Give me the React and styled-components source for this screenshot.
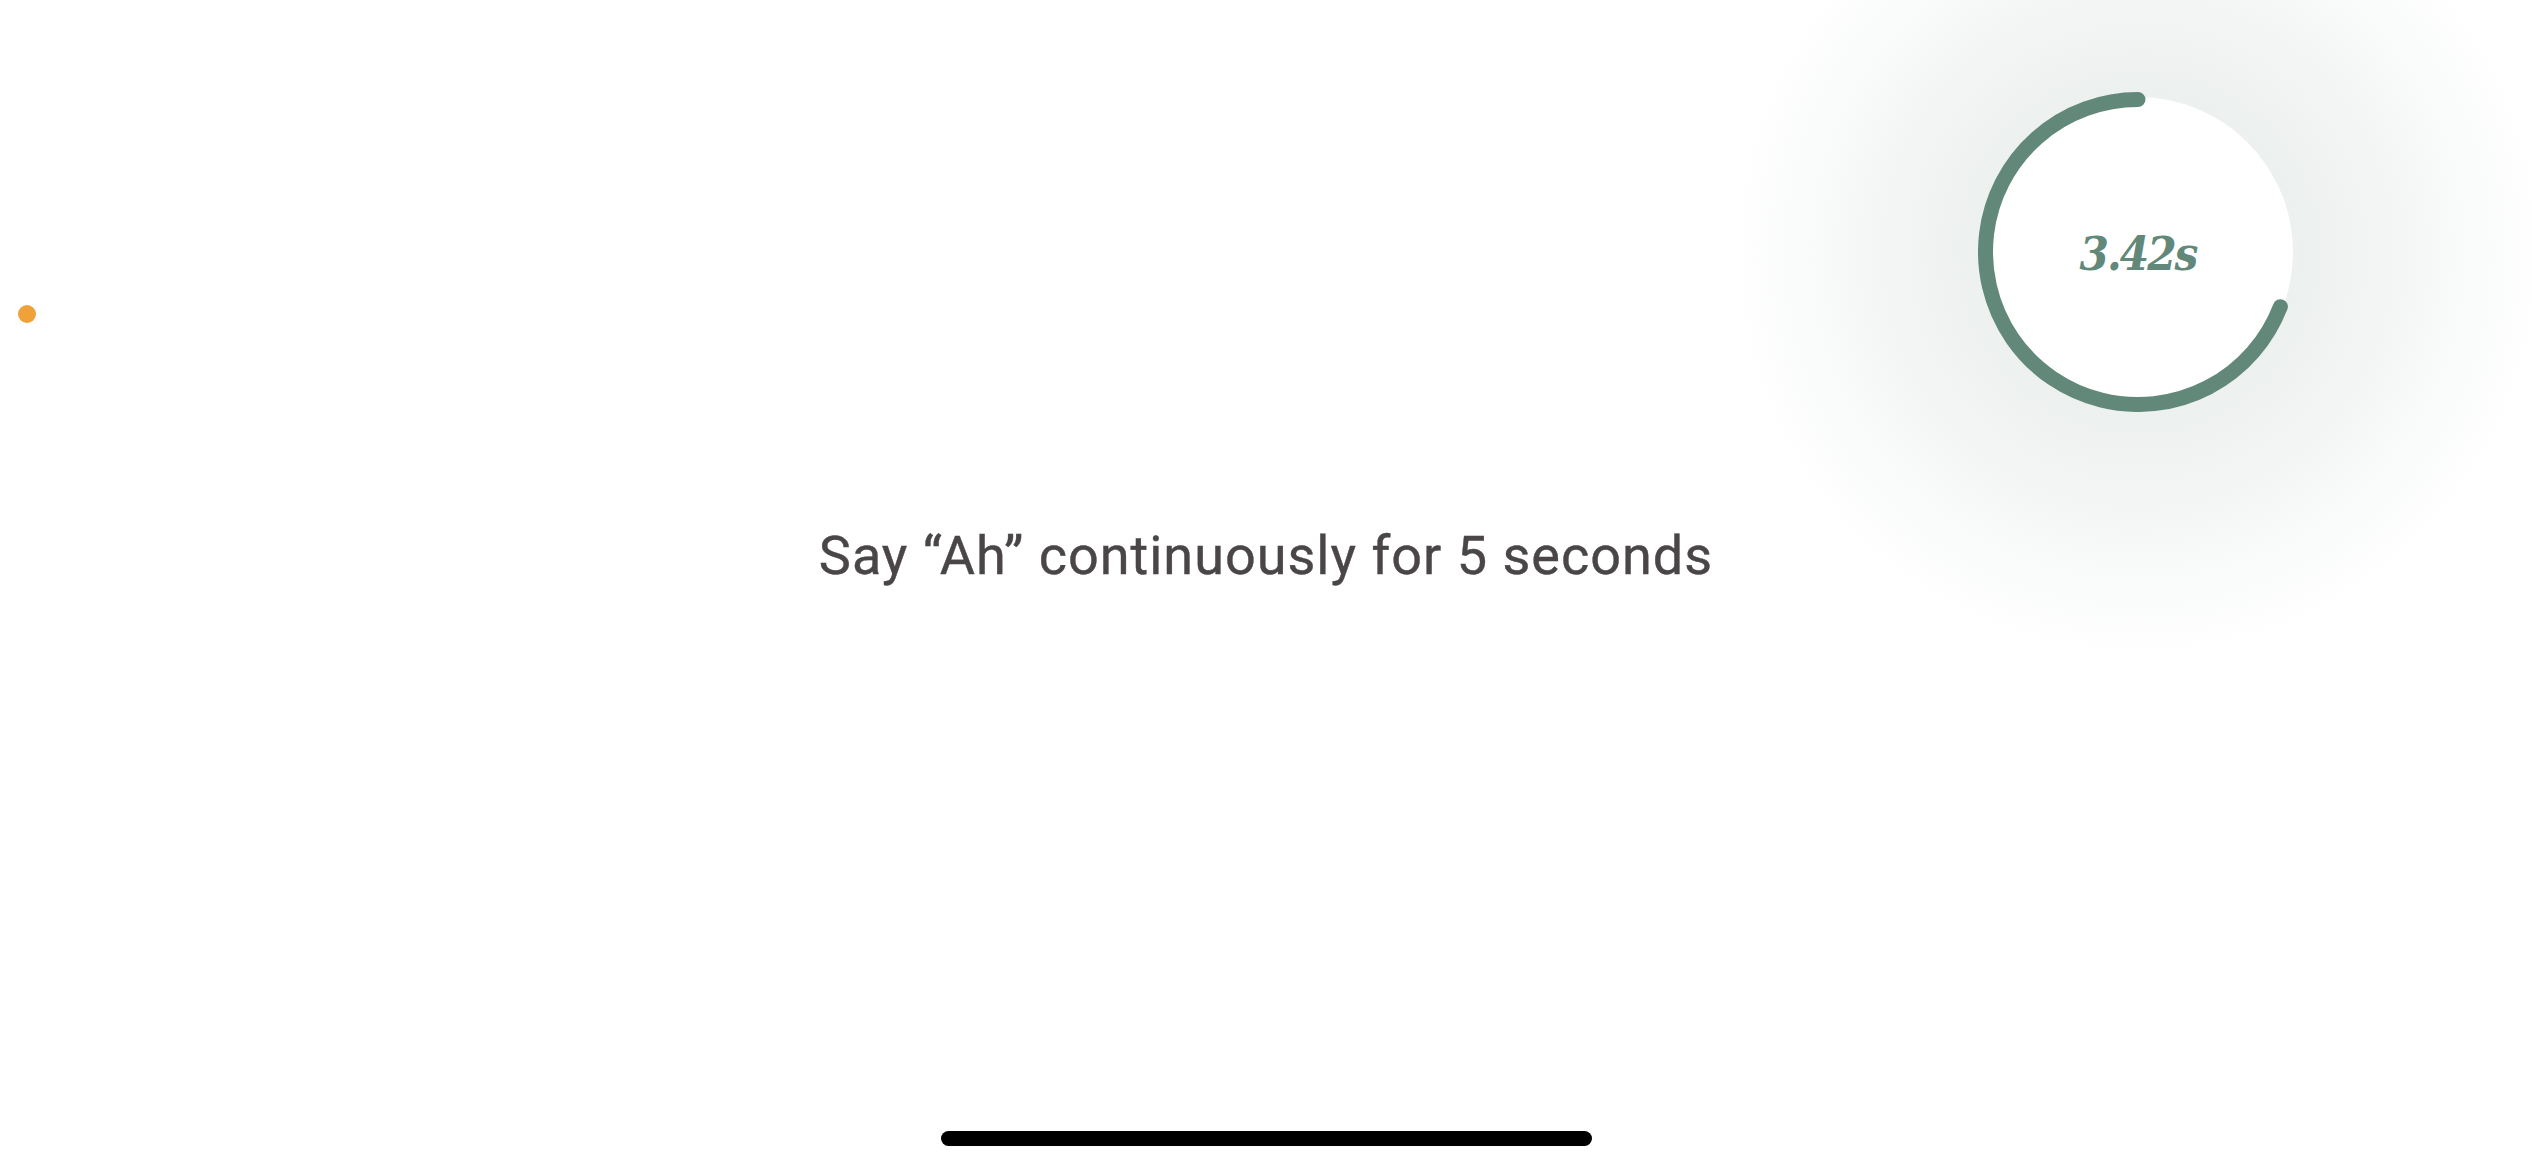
import React from "react";
import styled, { createGlobalStyle } from "styled-components";

const GlobalStyle = createGlobalStyle`
  html, body { margin: 0; padding: 0; background: #ffffff; }
  body { font-family: Roboto, "Liberation Sans", sans-serif; overflow: hidden; }
`;

const Screen = styled.div`
  position: relative;
  width: 2532px;
  height: 1170px;
  background: #ffffff;
  display: flex;
  flex-direction: column;
  align-items: center;
  overflow: hidden;
`;

const Header = styled.header`
  align-self: stretch;
  display: flex;
  justify-content: flex-end;
  padding: 92px 234px 0 0;
`;

const RingWrap = styled.div`
  position: relative;
  width: 320px;
  height: 320px;
`;

const Glow = styled.div`
  position: absolute;
  left: 50%;
  top: 50%;
  width: 820px;
  height: 820px;
  transform: translate(-50%, -50%);
  border-radius: 50%;
  background: radial-gradient(
    circle,
    #ecf0ee 0,
    #ecf0ee 150px,
    #eff2f1 195px,
    #f4f6f5 260px,
    #f9fafa 325px,
    rgba(255, 255, 255, 0) 405px
  );
  pointer-events: none;
`;

const RingSvg = styled.svg`
  position: relative;
  display: block;
`;

const Timer = styled.span`
  position: absolute;
  inset: 0;
  display: flex;
  align-items: center;
  justify-content: center;
  font-family: "DejaVu Serif Condensed", "Liberation Serif", serif;
  font-style: italic;
  font-weight: 700;
  font-size: 47px;
  letter-spacing: -2px;
  color: #62887a;
  padding-top: 2px;
`;

const Prompt = styled.p`
  margin: 112px 0 0;
  font-family: Roboto, "Liberation Sans", sans-serif;
  font-size: 54px;
  line-height: 64px;
  font-weight: 400;
  letter-spacing: 1px;
  color: #4a4648;
  white-space: nowrap;
  -webkit-text-stroke: 0.4px #4a4648;
`;

const Spacer = styled.div`
  flex: 1;
`;

const HomeBar = styled.div`
  width: 651px;
  height: 15px;
  border-radius: 8px;
  background: #000000;
  margin-bottom: 24px;
`;

const MicDot = styled.span`
  position: absolute;
  left: 18px;
  top: 305px;
  width: 18px;
  height: 18px;
  border-radius: 50%;
  background: #f0a23a;
`;

function ProgressRing({ angle }) {
  const c = 160;
  const r = 152.5;
  const rad = (angle * Math.PI) / 180;
  const ex = c - r * Math.sin(rad);
  const ey = c - r * Math.cos(rad);
  const large = angle > 180 ? 1 : 0;
  return (
    <RingSvg width="320" height="320" viewBox="0 0 320 320">
      <circle cx={c} cy={c} r={155} fill="#ffffff" />
      <path
        d={`M ${c} ${c - r} A ${r} ${r} 0 ${large} 0 ${ex} ${ey}`}
        fill="none"
        stroke="#62887a"
        strokeWidth="15"
        strokeLinecap="round"
      />
    </RingSvg>
  );
}

export default function App() {
  return (
    <>
      <GlobalStyle />
      <Screen>
        <MicDot />
        <Header>
          <RingWrap>
            <Glow />
            <ProgressRing angle={249} />
            <Timer>3.42s</Timer>
          </RingWrap>
        </Header>
        <Prompt>Say “Ah” continuously for 5 seconds</Prompt>
        <Spacer />
        <HomeBar />
      </Screen>
    </>
  );
}
